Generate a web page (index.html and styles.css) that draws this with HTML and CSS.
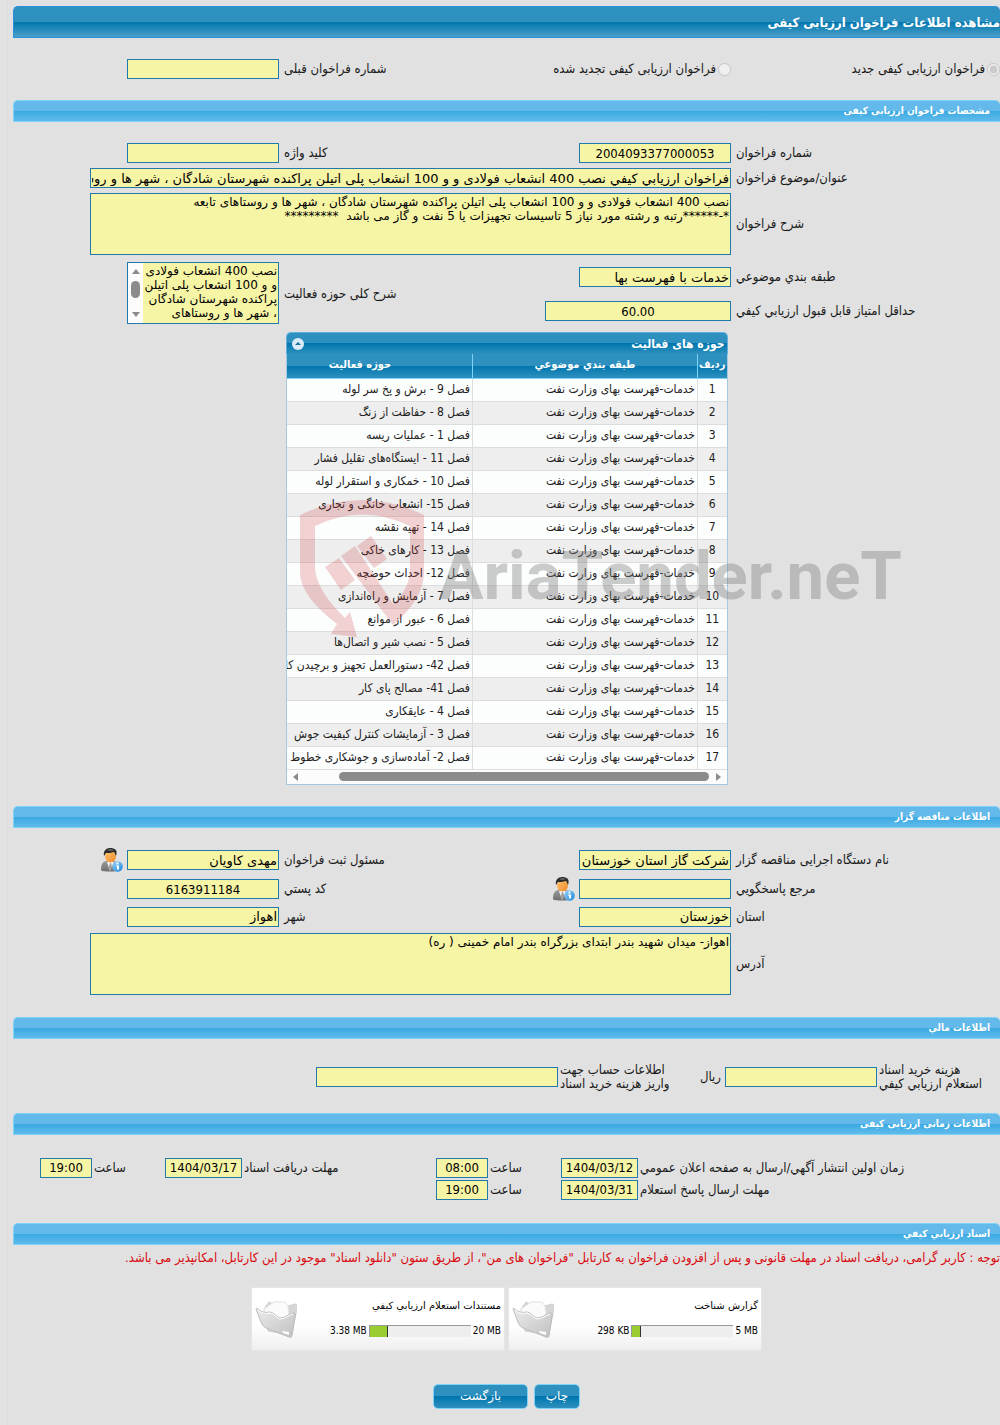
FILE: index.html
```html
<!DOCTYPE html>
<html lang="fa" dir="rtl">
<head>
    <meta charset="UTF-8">
    <meta name="viewport" content="width=device-width, initial-scale=1.0">
    <title>مشاهده اطلاعات فراخوان ارزیابی کیفی</title>
    <link rel="stylesheet" href="styles.css">
</head>
<body>
<svg class="defs" width="0" height="0" aria-hidden="true">
    <defs>
        <linearGradient id="face" x1="0" y1="0" x2="1" y2="1"><stop offset="0" stop-color="#ffc46b"/><stop offset="1" stop-color="#f08a2c"/></linearGradient>
        <linearGradient id="suit" x1="0" y1="0" x2="0" y2="1"><stop offset="0" stop-color="#9a9a9a"/><stop offset="1" stop-color="#6f6f6f"/></linearGradient>
        <linearGradient id="blue" x1="0" y1="0" x2="1" y2="1"><stop offset="0" stop-color="#9ad4fa"/><stop offset="1" stop-color="#1c86dc"/></linearGradient>
        <linearGradient id="fold" x1="0" y1="0" x2="1" y2="1"><stop offset="0" stop-color="#ececec"/><stop offset="1" stop-color="#c0c0c0"/></linearGradient>
        <symbol id="person" viewBox="0 0 22 24">
            <path d="M0 22c0-6 2-9 6-9h6c4 0 6 3 6 9 0 2-18 2-18 0z" fill="url(#suit)"/>
            <path d="M6 14l3 9 4-9z" fill="#f3f3f3"/>
            <path d="M9 15l-1 4 1 4 2-4-1-4z" fill="#9b9b9b"/>
            <ellipse cx="9.500" cy="8.500" rx="5.500" ry="6" fill="url(#face)"/>
            <path d="M3 8C2 3 5 0 9 0c5 0 8 2 6 8-1-2-1-3-2-4-3 1-6 1-8 1-1 1-1 2-2 3z" fill="#2b2b2b"/>
            <path d="M6 2c2-1 5-1 7 0-2 1-5 1-7 0z" fill="#777"/>
            <circle cx="16.500" cy="18.500" r="5.300" fill="url(#blue)"/>
            <path d="M15.500 14.500h2v2h-2zM15 17.500h3v4h-2v-3h-1z" fill="#fff"/>
        </symbol>
        <symbol id="folder" viewBox="0 0 42 38">
            <path d="M9 9l5-7 4 2 3-2 9 2 3 2 7-2c2 0 2 2 2 4l-5 27-24-4z" fill="#d6d6d6" stroke="#cfcfcf"/>
            <path d="M9 9l10-7 11 0 3 4 1 8-4 6-20-6z" fill="#fbfbfb" stroke="#e2e2e2"/>
            <path d="M1 9c0-1 1-1 2 0 3 3 7 4 11 3 5 0 6 4 11 6 5 0 7-3 13-5 2 0 3 1 2 3l-3 19c0 2-1 3-3 2L11 28c-2-1-4-3-5-6z" fill="url(#fold)" stroke="#bdbdbd"/>
            <path d="M3 10c3 3 7 4 11 3 5 0 6 4 11 6 5 0 7-3 13-5" fill="none" stroke="#fff"/>
            <path d="M27 31l7 1v3l-6-2z" fill="#fff"/>
        </symbol>
    </defs>
</svg>

<div class="page">
    <h1 class="title-bar">مشاهده اطلاعات فراخوان ارزیابی کیفی</h1>

    <div class="form-grid kind">
        <div class="radio"><input type="radio" name="kind" id="kindNew" checked disabled><label for="kindNew">فراخوان ارزیابی کیفی جدید</label></div>
        <div class="radio"><input type="radio" name="kind" id="kindRenew" disabled><label for="kindRenew">فراخوان ارزیابی کیفی تجدید شده</label></div>
        <label for="prevNo">شماره فراخوان قبلی</label>
        <input class="box" type="text" id="prevNo" readonly>
    </div>

    <h2 class="section-bar">مشخصات فراخوان ارزیابی کیفی</h2>
    <div class="form-grid">
        <label for="callNo">شماره فراخوان</label>
        <input class="box num" type="text" id="callNo" value="2004093377000053" readonly>
        <label for="keyword">کلید واژه</label>
        <input class="box" type="text" id="keyword" readonly>

        <label for="subject">عنوان/موضوع فراخوان</label>
        <input class="box wide" type="text" id="subject" value="فراخوان ارزيابي كيفي نصب 400 انشعاب فولادی و و 100 انشعاب پلی اتیلن پراکنده شهرستان شادگان ، شهر ها و روستاهای تابعه" readonly>

        <label for="descr">شرح فراخوان</label>
        <textarea class="box wide" id="descr" readonly>نصب 400 انشعاب فولادی و و 100 انشعاب پلی اتیلن پراکنده شهرستان شادگان ، شهر ها و روستاهای تابعه
*-******رتبه و رشته مورد نیاز 5 تاسیسات تجهیزات یا 5 نفت و گاز می باشد  *********</textarea>
    </div>
    <div class="form-grid scope">
        <label for="category">طبقه بندي موضوعي</label>
        <input class="box" type="text" id="category" value="خدمات با فهرست بها" readonly>
        <label class="tall" for="scopeText">شرح کلی حوزه فعالیت</label>
        <div class="box scroll-box tall">
            <textarea id="scopeText" readonly>نصب 400 انشعاب فولادی
و و 100 انشعاب پلی اتیلن
پراکنده شهرستان شادگان
، شهر ها و روستاهای</textarea>
            <div class="vbar"><i class="up"></i><i class="thumb"></i><i class="down"></i></div>
        </div>
        <label for="minScore">حداقل امتياز قابل قبول ارزيابي كيفي</label>
        <input class="box num score" type="text" id="minScore" value="60.00" readonly>
    </div>

    <div class="panel">
        <div class="panel-title">
            <span>حوزه های فعالیت</span>
            <button class="collapse" type="button" aria-label="بستن">
                <svg width="12" height="12" viewBox="0 0 12 12"><circle cx="6" cy="6" r="6" fill="#d9ebf7"/><path d="M3 7l3-3 3 3z" fill="#1b6f9f"/></svg>
            </button>
        </div>
        <table class="grid">
            <thead>
                <tr><th class="c-no">ردیف</th><th class="c-cat">طبقه بندي موضوعي</th><th class="c-act">حوزه فعالیت</th></tr>
            </thead>
            <tbody>
                <tr><td>1</td><td>خدمات-فهرست بهای وزارت نفت</td><td>فصل 9 - برش و پخ سر لوله</td></tr>
                <tr><td>2</td><td>خدمات-فهرست بهای وزارت نفت</td><td>فصل 8 - حفاظت از زنگ</td></tr>
                <tr><td>3</td><td>خدمات-فهرست بهای وزارت نفت</td><td>فصل 1 - عملیات ریسه</td></tr>
                <tr><td>4</td><td>خدمات-فهرست بهای وزارت نفت</td><td>فصل 11 - ایستگاه‌های تقلیل فشار</td></tr>
                <tr><td>5</td><td>خدمات-فهرست بهای وزارت نفت</td><td>فصل 10 - خمکاری و استقرار لوله</td></tr>
                <tr><td>6</td><td>خدمات-فهرست بهای وزارت نفت</td><td>فصل 15- انشعاب خانگی و تجاری</td></tr>
                <tr><td>7</td><td>خدمات-فهرست بهای وزارت نفت</td><td>فصل 14 - تهیه نقشه</td></tr>
                <tr><td>8</td><td>خدمات-فهرست بهای وزارت نفت</td><td>فصل 13 - کارهای خاکی</td></tr>
                <tr><td>9</td><td>خدمات-فهرست بهای وزارت نفت</td><td>فصل 12- احداث حوضچه</td></tr>
                <tr><td>10</td><td>خدمات-فهرست بهای وزارت نفت</td><td>فصل 7 - آزمایش و راه‌اندازی</td></tr>
                <tr><td>11</td><td>خدمات-فهرست بهای وزارت نفت</td><td>فصل 6 - عبور از موانع</td></tr>
                <tr><td>12</td><td>خدمات-فهرست بهای وزارت نفت</td><td>فصل 5 - نصب شیر و اتصال‌ها</td></tr>
                <tr><td>13</td><td>خدمات-فهرست بهای وزارت نفت</td><td>فصل 42- دستورالعمل تجهیز و برچیدن کارگاه</td></tr>
                <tr><td>14</td><td>خدمات-فهرست بهای وزارت نفت</td><td>فصل 41- مصالح پای کار</td></tr>
                <tr><td>15</td><td>خدمات-فهرست بهای وزارت نفت</td><td>فصل 4 - عایقکاری</td></tr>
                <tr><td>16</td><td>خدمات-فهرست بهای وزارت نفت</td><td>فصل 3 - آزمایشات کنترل کیفیت جوش</td></tr>
                <tr><td>17</td><td>خدمات-فهرست بهای وزارت نفت</td><td>فصل 2- آماده‌سازی و جوشکاری خطوط لوله</td></tr>
            </tbody>
        </table>
        <div class="hbar"><i class="right"></i><i class="thumb"></i><i class="left"></i></div>

        <div class="watermark" dir="ltr">
            <svg width="125" height="138" viewBox="0 0 125 138">
                <path fill="#c8282d" d="M0 15Q62-15 124 15V72Q124 99 93 125L41 56 55 46 93 104Q110 88 110 70V26Q62 3 15 26V68Q16 90 45 118L50 112 57 137 31 134 37 124Q0 96 0 72Z"/>
                <path fill="#c8282d" d="M25 67L39 58 55 80 41 90zM57 46L71 36 87 59 74 68z"/>
            </svg>
            <span>AriaTender.neT</span>
        </div>
    </div>

    <h2 class="section-bar">اطلاعات مناقصه گزار</h2>
    <div class="form-grid owner">
        <label for="org">نام دستگاه اجرایی مناقصه گزار</label>
        <input class="box" type="text" id="org" value="شركت گاز استان خوزستان" readonly>
        <label for="registrar">مسئول ثبت فراخوان</label>
        <div class="with-icon">
            <input class="box" type="text" id="registrar" value="مهدی کاویان" readonly>
            <svg width="22" height="24"><use href="#person"/></svg>
        </div>

        <label for="answerer">مرجع پاسخگويي</label>
        <div class="with-icon">
            <input class="box" type="text" id="answerer" readonly>
            <svg width="22" height="24"><use href="#person"/></svg>
        </div>
        <label for="postal">كد پستي</label>
        <input class="box num" type="text" id="postal" value="6163911184" readonly>

        <label for="province">استان</label>
        <input class="box" type="text" id="province" value="خوزستان" readonly>
        <label for="city">شهر</label>
        <input class="box" type="text" id="city" value="اهواز" readonly>

        <label for="address">آدرس</label>
        <textarea class="box wide" id="address" readonly>اهواز- میدان شهید بندر ابتدای بزرگراه بندر امام خمینی ( ره)</textarea>
    </div>

    <h2 class="section-bar">اطلاعات مالي</h2>
    <div class="money">
        <label for="cost">هزینه خرید اسناد<br>استعلام ارزيابي كيفي</label>
        <div class="amount"><input class="box" type="text" id="cost" readonly><span>ریال</span></div>
        <label for="account">اطلاعات حساب جهت<br>واریز هزینه خرید اسناد</label>
        <input class="box account" type="text" id="account" readonly>
    </div>

    <h2 class="section-bar">اطلاعات زمانی ارزیابی کیفی</h2>
    <div class="times">
        <label for="pubDate">زمان اولین انتشار آگهي/ارسال به صفحه اعلان عمومي</label>
        <input class="box num date" type="text" id="pubDate" value="1404/03/12" readonly>
        <label for="pubTime">ساعت</label>
        <input class="box num time" type="text" id="pubTime" value="08:00" readonly>
        <label for="docDate">مهلت دریافت اسناد</label>
        <input class="box num date" type="text" id="docDate" value="1404/03/17" readonly>
        <label for="docTime">ساعت</label>
        <input class="box num time" type="text" id="docTime" value="19:00" readonly>

        <label for="ansDate">مهلت ارسال پاسخ استعلام</label>
        <input class="box num date" type="text" id="ansDate" value="1404/03/31" readonly>
        <label for="ansTime">ساعت</label>
        <input class="box num time" type="text" id="ansTime" value="19:00" readonly>
    </div>

    <h2 class="section-bar">اسناد ارزيابي كيفي</h2>
    <p class="notice">توجه : کاربر گرامی، دریافت اسناد در مهلت قانونی و پس از افزودن فراخوان به کارتابل "فراخوان های من"، از طریق ستون "دانلود اسناد" موجود در این کارتابل، امکانپذیر می باشد.</p>

    <div class="cards">
        <div class="card">
            <div class="card-info">
                <div class="card-name">گزارش شناخت</div>
                <div class="usage"><span dir="ltr">5 MB</span><div class="meter"><i style="width: 8%"></i></div><span dir="ltr">298 KB</span></div>
            </div>
            <svg class="folder" width="42" height="38"><use href="#folder"/></svg>
        </div>
        <div class="card">
            <div class="card-info">
                <div class="card-name">مستندات استعلام ارزيابي كيفي</div>
                <div class="usage"><span dir="ltr">20 MB</span><div class="meter"><i style="width: 18%"></i></div><span dir="ltr">3.38 MB</span></div>
            </div>
            <svg class="folder" width="42" height="38"><use href="#folder"/></svg>
        </div>
    </div>

    <div class="actions">
        <button class="btn" type="button">چاپ</button>
        <button class="btn back" type="button">بازگشت</button>
    </div>
</div>
</body>
</html>
```
FILE: styles.css
```css
* { box-sizing: border-box; }
body { margin: 0; background: #e2e2e2; color: #1a1a1a; font: 13px/14px "DejaVu Sans Condensed", "DejaVu Sans", sans-serif; }
input, textarea, button { font-family: "DejaVu Sans", sans-serif; margin: 0; }
.defs { position: absolute; }
.page { margin-left: 7px; padding: 6px 0 16px 5px; border-left: 1px solid #dcdcdc; background: #e1e1e1; }

.title-bar { margin: 0; height: 32px; line-height: 32px; font-size: 13px; color: #fff; border: 1px solid #2d8fdc; border-right: 0; border-radius: 5px 5px 0 0; background: linear-gradient(#2e90be 50%, #0076ae 50%, #4b9fc8); }
.section-bar { margin: 0; height: 22px; line-height: 20px; padding: 0 10px; font-size: 10px; color: #fff; border: 1px solid #7dd3f7; border-right: 0; border-radius: 5px 5px 0 0; background: linear-gradient(#63b9e9 50%, #3aa9e2 50%, #5fbbea); }

.box { height: 20px; padding: 0 1px; width: 152px; border: 1px solid #2279ab; border-radius: 0; background: #f6f4a5; color: #000; font-size: 13px; outline: none; }
.num { direction: ltr; text-align: center; font-family: "DejaVu Sans Condensed", "DejaVu Sans", sans-serif; }
textarea { resize: none; overflow: hidden; }
textarea.box { height: 62px; padding: 1px; font-size: 12px; line-height: 14px; }

.form-grid { display: grid; grid-template-columns: 264fr 280fr 162fr 266fr; gap: 5px; align-items: center; padding: 21px 0 0; }
.form-grid > label { text-align: left; }
.wide { grid-column: 2 / 5; width: 641px; max-width: 100%; }
.kind { padding-bottom: 21px; }
.radio { display: flex; align-items: center; gap: 2px; }
.radio input { width: 13px; height: 13px; margin: 0; }
.scope { grid-auto-rows: 30px; row-gap: 4px; padding-top: 7px; }
.tall { grid-row: 1 / 3; }
label.tall { grid-column: 3; }
div.tall { grid-column: 4; align-self: start; }
.score { width: 186px; }
.scroll-box { display: flex; height: 62px; padding: 0; }
.scroll-box textarea { flex: 1; width: 100%; border: 0; padding: 1px 1px 0; background: none; font-size: 12px; line-height: 14px; outline: none; white-space: pre; }
.vbar { width: 15px; display: flex; flex-direction: column; align-items: center; background: #fcfcfc; padding: 6px 0; }
.vbar .up { border: 4px solid transparent; border-top: 0; border-bottom: 5px solid #8b8b8b; }
.vbar .thumb { width: 9px; height: 17px; margin: 7px 0 auto; border-radius: 5px; background: #8b8b8b; }
.vbar .down { border: 4px solid transparent; border-bottom: 0; border-top: 5px solid #8b8b8b; }

.panel { position: relative; width: 442px; margin: 6px auto 21px; }
.panel-title { display: flex; justify-content: space-between; align-items: center; height: 22px; padding: 0 2px 0 5px; font-size: 12px; font-weight: bold; color: #fff; border: 1px solid #62aede; border-bottom: 0; border-radius: 5px 5px 0 0; background: linear-gradient(#2e90be 50%, #0076ae 50%, #2e90be); }
.collapse { display: flex; padding: 0; border: 0; background: none; }
.grid { display: block; overflow: hidden; border-collapse: collapse; border: solid #a6c9e2; border-width: 0 1px; font-size: 12px; }
.grid th { height: 24px; padding: 0 0 2px; font-size: 11px; color: #fff; border-left: 1px solid #7dd3f7; border-bottom: 1px solid #7dd3f7; background: linear-gradient(#2e90be 50%, #0076ae 50%, #2e90be); }
.grid td { height: 23px; padding: 0 2px 1px; white-space: nowrap; color: #222; border-left: 1px solid #ddd; border-bottom: 1px solid #ddd; background: #fcfdfd; }
.grid tr:nth-child(even) td { background: #eee; }
.grid td:first-child { text-align: center; }
.c-no { min-width: 29px; }
.c-cat, .c-act { min-width: 225px; }
.hbar { display: flex; align-items: center; height: 15px; padding: 0 6px; background: #fcfcfc; border: 1px solid #a6c9e2; border-top: 0; }
.hbar .right { border: 4px solid transparent; border-right: 0; border-left: 5px solid #8b8b8b; }
.hbar .left { border: 4px solid transparent; border-left: 0; border-right: 5px solid #8b8b8b; margin-right: auto; }
.hbar .thumb { width: 370px; height: 9px; margin-right: 7px; border-radius: 5px; background: #8b8b8b; }

.watermark { position: absolute; left: 14px; top: 168px; display: flex; align-items: center; gap: 14px; pointer-events: none; font: bold 67px/80px Roboto, sans-serif; color: rgba(128, 128, 128, 0.4); }
.watermark svg { opacity: 0.2; }
.watermark span { padding-top: 14px; }

.owner { padding-bottom: 22px; row-gap: 6px; }
.with-icon { display: flex; align-items: center; gap: 4px; height: 23px; }

.money { display: flex; align-items: center; gap: 2px; padding: 24px 0 22px; }
.money label { width: 121px; text-align: left; }
.amount { display: flex; align-items: center; gap: 4px; width: 194px; }
.money .account { width: 242px; }

.times { display: grid; grid-template-columns: 360px 77px 69px 52px 190px 77px 69px 52px; gap: 2px; align-items: center; padding: 23px 0; }
.times label { text-align: left; }
.date, .time { width: 100%; }

.notice { margin: 6px 0 0; color: #d9090f; white-space: nowrap; }
.cards { display: flex; justify-content: center; gap: 3px; margin: 22px 0 33px; }
.card { display: flex; align-items: center; justify-content: space-between; width: 254px; height: 64px; padding: 0 3px; border: 1px solid #e6e6e6; background: linear-gradient(#fff 60%, #efefef); font-size: 10px; color: #000; }
.card-name { margin-bottom: 11px; font-family: "DejaVu Sans", sans-serif; }
.usage { display: flex; align-items: center; gap: 2px; }
.meter { width: 102px; height: 12px; border: solid #999; border-width: 1px 0 0 1px; background: #eee; direction: ltr; }
.meter i { display: block; height: 100%; background: #9acd32; border-right: 1px solid #333; }

.actions { display: flex; justify-content: center; gap: 6px; }
.btn { min-width: 46px; height: 25px; padding: 0; color: #fff; font-size: 12px; border: 1px solid #7dd3f7; border-radius: 5px; background: linear-gradient(#2e90be 50%, #0076ae 50%, #2e90be); }
.back { min-width: 95px; }
```
